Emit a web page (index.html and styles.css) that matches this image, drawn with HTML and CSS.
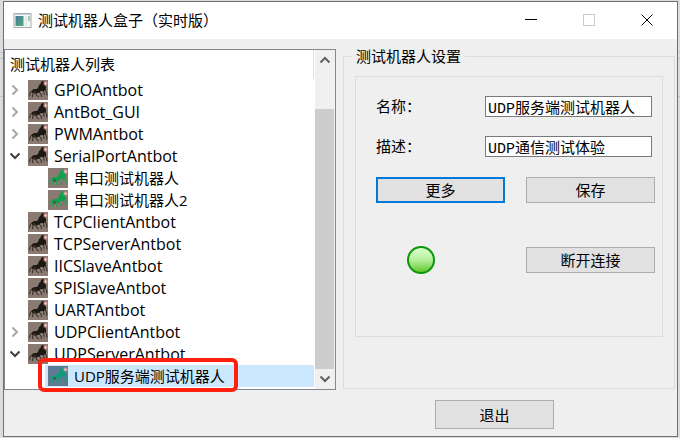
FILE: index.html
```html
<!DOCTYPE html>
<html lang="zh-CN">
<head>
<meta charset="utf-8">
<title>测试机器人盒子（实时版）</title>
<link rel="stylesheet" href="styles.css">
</head>
<body>
<svg class="defs" aria-hidden="true">
  <defs>
    <radialGradient id="glow">
      <stop offset="0" stop-color="#ffe9e4"/>
      <stop offset="0.4" stop-color="#e3a8a4" stop-opacity="0.8"/>
      <stop offset="1" stop-color="#c08a85" stop-opacity="0"/>
    </radialGradient>
    <symbol id="ant" viewBox="0 0 20 20">
      <path d="M9 9 10.500 7 11 5 12.500 4 13 2 15 1 16.500 2 17 5 18 7 18 9.500 16 11 13 11 11 12.500 8.500 13.500 6 13.500 4 12.500 3.500 11 5 9.500 7 9z" fill="currentColor"/>
      <path d="M4.500 11 2.500 12 1.500 16.500M5 12.500 4.500 17M8 13 8.500 15.500 11 17M11 12 13 14 13.500 17M15 10.500 16 13 16 15M17 9.500 18.500 12 19 15.500" fill="none" stroke="currentColor" stroke-width="0.800"/>
      <circle class="spot" cx="6.500" cy="12.500" r="1.500"/>
      <circle cx="17.500" cy="3.500" r="3" fill="url(#glow)"/>
    </symbol>
    <symbol id="chevron" viewBox="0 0 12 12">
      <path d="M1.500 3.500 6 8 10.500 3.500" fill="none" stroke="currentColor" stroke-width="2"/>
    </symbol>
  </defs>
</svg>

<div class="window">
  <header class="titlebar">
    <svg class="app-icon" viewBox="0 0 18 15">
      <defs>
        <linearGradient id="app" x2="1" y2="1">
          <stop offset="0" stop-color="#4878a8"/>
          <stop offset="1" stop-color="#4fb06a"/>
        </linearGradient>
      </defs>
      <rect x="0.500" y="0.500" width="17" height="14" fill="#f6f8fa" stroke="#a3abb3"/>
      <path d="M1 1.500H17" stroke="#ccd3da"/>
      <rect x="2" y="3" width="8" height="10" fill="url(#app)"/>
      <rect x="11" y="3" width="3" height="10" fill="#e6ebef"/>
      <rect x="15" y="3" width="1" height="5" fill="#4fa27e"/>
    </svg>
    <h1 class="title">测试机器人盒子（实时版）</h1>
    <div class="window-buttons">
      <button class="window-button" aria-label="最小化">
        <svg viewBox="0 0 12 12"><path d="M0 5.500H12" stroke="#000"/></svg>
      </button>
      <button class="window-button" aria-label="最大化" disabled>
        <svg viewBox="0 0 12 12"><rect x="0.500" y="0.500" width="11" height="11" fill="none" stroke="#ccc"/></svg>
      </button>
      <button class="window-button" aria-label="关闭">
        <svg viewBox="0 0 12 12"><path d="M0.500 0.500 11.500 11.500M11.500 0.500 0.500 11.500" stroke="#000"/></svg>
      </button>
    </div>
  </header>

  <main class="content">
    <section class="tree-panel">
      <div class="tree-view">
        <h2 class="tree-header">测试机器人列表</h2>
        <ul class="tree">
          <li class="row"><button class="toggle closed" aria-label="展开"><svg><use href="#chevron"/></svg></button><span class="item"><svg class="ant"><use href="#ant"/></svg>GPIOAntbot</span></li>
          <li class="row"><button class="toggle closed" aria-label="展开"><svg><use href="#chevron"/></svg></button><span class="item"><svg class="ant"><use href="#ant"/></svg>AntBot_GUI</span></li>
          <li class="row"><button class="toggle closed" aria-label="展开"><svg><use href="#chevron"/></svg></button><span class="item"><svg class="ant"><use href="#ant"/></svg>PWMAntbot</span></li>
          <li class="row"><button class="toggle" aria-label="收起"><svg><use href="#chevron"/></svg></button><span class="item"><svg class="ant"><use href="#ant"/></svg>SerialPortAntbot</span></li>
          <li class="row child"><span class="item"><svg class="ant online"><use href="#ant"/></svg>串口测试机器人</span></li>
          <li class="row child"><span class="item"><svg class="ant online"><use href="#ant"/></svg>串口测试机器人2</span></li>
          <li class="row"><span class="item"><svg class="ant"><use href="#ant"/></svg>TCPClientAntbot</span></li>
          <li class="row"><span class="item"><svg class="ant"><use href="#ant"/></svg>TCPServerAntbot</span></li>
          <li class="row"><span class="item"><svg class="ant"><use href="#ant"/></svg>IICSlaveAntbot</span></li>
          <li class="row"><span class="item"><svg class="ant"><use href="#ant"/></svg>SPISlaveAntbot</span></li>
          <li class="row"><span class="item"><svg class="ant"><use href="#ant"/></svg>UARTAntbot</span></li>
          <li class="row"><button class="toggle closed" aria-label="展开"><svg><use href="#chevron"/></svg></button><span class="item"><svg class="ant"><use href="#ant"/></svg>UDPClientAntbot</span></li>
          <li class="row"><button class="toggle" aria-label="收起"><svg><use href="#chevron"/></svg></button><span class="item"><svg class="ant"><use href="#ant"/></svg>UDPServerAntbot</span></li>
          <li class="row child selected"><span class="item"><svg class="ant online"><use href="#ant"/></svg>UDP服务端测试机器人</span><span class="marker"></span></li>
        </ul>
      </div>
      <div class="scrollbar">
        <button class="scroll-button up" aria-label="向上"><svg><use href="#chevron"/></svg></button>
        <div class="track"><div class="thumb"></div></div>
        <button class="scroll-button" aria-label="向下"><svg><use href="#chevron"/></svg></button>
      </div>
    </section>

    <fieldset class="settings">
      <legend>测试机器人设置</legend>
      <form class="form">
        <div class="field">
          <label for="name">名称：</label>
          <input id="name" type="text" value="UDP服务端测试机器人">
        </div>
        <div class="field">
          <label for="desc">描述：</label>
          <input id="desc" type="text" value="UDP通信测试体验">
        </div>
        <div class="actions">
          <button class="button default" type="button">更多</button>
          <button class="button" type="button">保存</button>
        </div>
        <div class="actions connection">
          <span class="led"></span>
          <button class="button" type="button">断开连接</button>
        </div>
      </form>
    </fieldset>
  </main>

  <footer class="footer">
    <button class="button exit">退出</button>
  </footer>
</div>
</body>
</html>
```
FILE: styles.css
```css
* {
  box-sizing: border-box;
}

body {
  margin: 0;
  padding: 1px 2px 1px 3px;
  min-height: 100vh;
  display: flex;
  background: linear-gradient(#c4c4c4, #c4c4c4) 0 52px / 100% 1px no-repeat,
    linear-gradient(#c4c4c4, #c4c4c4) 0 58px / 100% 1px no-repeat,
    linear-gradient(#c4c4c4, #c4c4c4) 0 96px / 100% 1px no-repeat,
    #dcdcdc;
  color: #000;
  font-family: "Open Sans", "Noto Sans CJK SC", sans-serif;
  font-size: 15px;
  line-height: 22px;
}

button,
input {
  font: inherit;
  color: inherit;
  margin: 0;
}

.defs {
  position: absolute;
  width: 0;
  height: 0;
}

.window {
  flex: 1;
  display: flex;
  flex-direction: column;
  border: 1px solid #707070;
  background: #efefef;
}

/* title bar */
.titlebar {
  display: flex;
  align-items: center;
  height: 37px;
  padding: 0 1px 1px 9px;
  background: #fff;
}

.app-icon {
  width: 19px;
  height: 15px;
  margin-right: 6px;
}

.title {
  margin: 0;
  flex: 1;
  font-size: 15px;
  font-weight: normal;
}

.window-buttons {
  display: flex;
}

.window-button {
  width: 58px;
  height: 36px;
  padding: 0;
  border: 0;
  background: none;
}

.window-button svg {
  display: block;
  width: 12px;
  height: 12px;
  margin: auto;
}

/* main area */
.content {
  display: grid;
  grid-template-columns: 1fr 1fr;
  gap: 7px;
  padding: 10px 2px 0 0;
}

.tree-panel {
  display: flex;
  border: 1px solid #828790;
  background: #fff;
}

.tree-view {
  flex: 1;
  padding: 0 1px 2px 0;
}

.tree-header {
  height: 29px;
  margin: 0;
  padding: 3px 5px;
  border-right: 1px solid #e0e0e0;
  font-size: 15px;
  font-weight: normal;
}

.tree {
  margin: 0;
  padding: 0;
  list-style: none;
}

.row {
  position: relative;
  display: grid;
  grid-template-columns: 20px 1fr;
  height: 22px;
  font-size: 16px;
}

.row.child {
  grid-template-columns: 40px 1fr;
  font-size: 15px;
}

.item {
  grid-column: 2;
  display: flex;
  align-items: center;
  gap: 6px;
  padding-left: 3px;
  white-space: nowrap;
}

.toggle {
  padding: 0;
  border: 0;
  background: none;
  color: #404040;
}

.toggle svg,
.scroll-button svg {
  display: block;
  width: 12px;
  height: 12px;
  margin: auto;
}

.toggle.closed {
  color: #a6a6a6;
}

.toggle.closed svg {
  transform: rotate(-90deg);
}

.ant {
  width: 20px;
  height: 20px;
  background: #8b7a72;
  color: #1c1816;
}

.spot {
  fill: #5a3a20;
  fill-opacity: 0.6;
}

.ant.online {
  color: #0fa050;
}

.online .spot {
  fill: none;
}

.selected .item {
  background: #cce8ff;
}

.selected .ant {
  background: #5f7b93;
  color: #119a7c;
}

.marker {
  position: absolute;
  top: -7px;
  left: 33px;
  width: 200px;
  height: 34px;
  border: 4px solid #ff2010;
  border-radius: 6px;
}

.scrollbar {
  display: flex;
  flex-direction: column;
  width: 20px;
  padding-right: 1px;
  background: #f0f0f0;
}

.scroll-button {
  height: 20px;
  padding: 0;
  border: 0;
  background: none;
  color: #606060;
}

.scroll-button.up svg {
  transform: rotate(180deg);
}

.track {
  flex: 1;
  display: flex;
  padding-top: 39px;
}

.thumb {
  flex: 1;
  background: #cdcdcd;
}

/* settings */
.settings,
.button {
  font-family: "Noto Sans CJK SC", sans-serif;
}

.settings {
  min-width: 0;
  margin: 0 0 1px;
  padding: 13px 11px 0;
  border: 1px solid #dcdcdc;
}

.settings legend {
  height: 14px;
  margin-left: -4px;
  padding: 0 4px 0 5px;
  line-height: 14px;
}

.form {
  display: flex;
  flex-direction: column;
  gap: 18px;
  height: 261px;
  padding: 18px 7px 0 20px;
  border: 1px solid #dcdcdc;
}

.field {
  display: flex;
  align-items: center;
  justify-content: space-between;
  padding-right: 3px;
}

.field input {
  width: 167px;
  height: 21px;
  padding: 1px 2px 0;
  border: 1px solid #7a7a7a;
  background: #fff;
  font-family: "Liberation Mono", "Noto Sans CJK SC", monospace;
  line-height: 17px;
}

.actions {
  display: grid;
  grid-template-columns: 1fr 1fr;
  align-items: center;
  gap: 21px;
  margin-top: 2px;
}

.connection {
  margin-top: 25px;
}

.button {
  height: 26px;
  padding: 0;
  border: 1px solid #adadad;
  background: #e1e1e1;
}

.button.default {
  border: 2px solid #0078d7;
}

.led {
  width: 28px;
  height: 28px;
  margin-left: 31px;
  border: 2px solid #0b960b;
  border-radius: 50%;
  background: linear-gradient(#dcffd0, #b4f09a 50%, #62c832);
}

.footer {
  display: flex;
  justify-content: flex-end;
  padding: 10px 123px 7px 0;
}

.exit {
  width: 119px;
  height: 29px;
}
```
